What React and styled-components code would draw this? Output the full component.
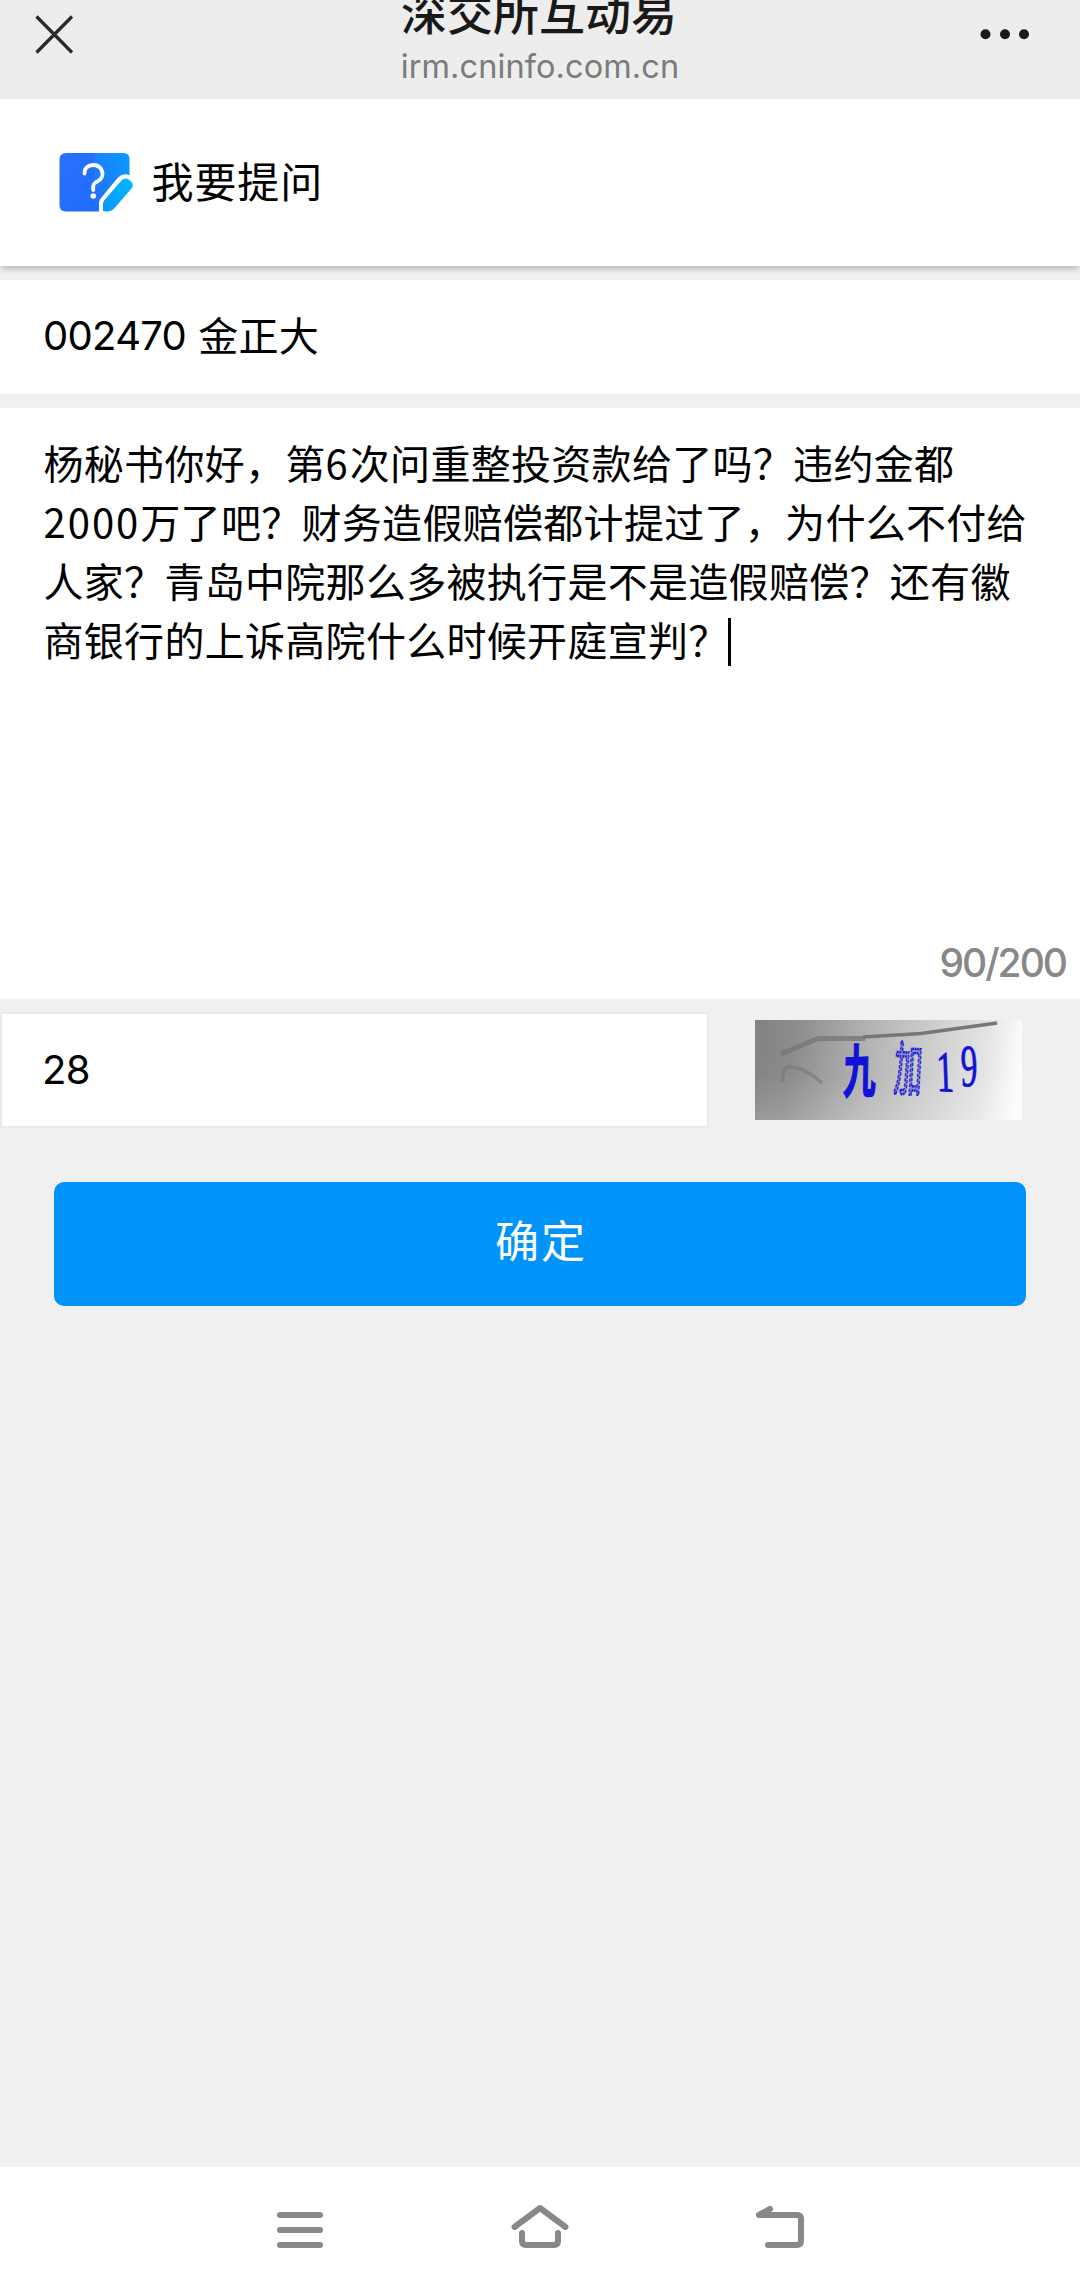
import React from 'react';
import styled, { createGlobalStyle } from 'styled-components';

const GlobalStyle = createGlobalStyle`
  * { box-sizing: border-box; }
  body {
    margin: 0;
    background: #f0f0f0;
    font-family: Roboto, "Noto Sans CJK SC", sans-serif;
    color: #000;
  }
`;

const Screen = styled.div`
  display: flex;
  flex-direction: column;
  width: 1080px;
  height: 2293px;
  overflow: hidden;
  background: #f0f0f0;
`;

const TopBar = styled.header`
  display: grid;
  grid-template-columns: 200px 1fr 200px;
  flex: none;
  height: 99px;
  background: #ededed;
  overflow: hidden;
`;

const BarIcon = styled.div`
  display: flex;
  justify-content: ${(p) => p.$side};
  padding: 14px 49px 0 35px;
  svg { display: block; flex: none; }
`;

const TitleBlock = styled.div`
  display: flex;
  flex-direction: column;
  align-items: center;
  white-space: nowrap;
`;

const SiteTitle = styled.div`
  margin: -19px 2px 0 0;
  height: 58px;
  font: 500 46px/58px "Noto Sans CJK SC", sans-serif;
  color: #191919;
`;

const SiteHost = styled.div`
  margin-top: 8px;
  font-family: Inter, sans-serif;
  font-size: 32.5px;
  line-height: 40px;
  letter-spacing: 0.1px;
  color: #7b7b7b;
`;

const PageHead = styled.section`
  display: flex;
  align-items: center;
  flex: none;
  height: 167px;
  padding: 0 0 2px 58px;
  background: #fff;
  box-shadow: 0 4px 6px -1px rgba(0, 0, 0, 0.24);
  svg { display: block; }
`;

const PageTitle = styled.h1`
  margin: 0 0 3px 15.5px;
  font: 400 42px/60px "Noto Sans CJK SC", sans-serif;
  letter-spacing: 0.9px;
`;

const StockRow = styled.div`
  display: flex;
  align-items: center;
  flex: none;
  gap: 12px;
  height: 114px;
  margin-top: 14px;
  padding: 0 0 2px 43px;
  background: #fff;
`;

const StockName = styled.span`
  padding-bottom: 5px;
  font-family: "Noto Sans CJK SC", sans-serif;
  font-size: 40px;
  letter-spacing: 0.35px;
`;

const Value = styled.span`
  padding-bottom: 1px;
  font-family: Inter, sans-serif;
  font-size: 40px;
  letter-spacing: -0.7px;
`;

const Digits = styled.span`
  letter-spacing: 2px;
`;

const QuestionBox = styled.section`
  display: flex;
  flex-direction: column;
  justify-content: space-between;
  flex: none;
  height: 591px;
  margin-top: 14px;
  padding: 25px 14px 13px 43.5px;
  background: #fff;
`;

const Question = styled.div`
  font: 400 40px/59px "Noto Sans CJK SC", sans-serif;
  letter-spacing: 0.3px;
  white-space: nowrap;
`;

const Line = styled.div`
  display: flex;
  align-items: center;
  height: 59px;
`;

const Caret = styled.i`
  width: 3px;
  height: 48px;
  margin: 4px 0 0 -1px;
  background: #000;
`;

const Counter = styled.div`
  align-self: flex-end;
  font-family: Inter, sans-serif;
  font-size: 39px;
  line-height: 46px;
  font-weight: 500;
  letter-spacing: -2px;
  color: #888;
`;

const VerifyRow = styled.div`
  display: flex;
  align-items: flex-start;
  flex: none;
  margin-top: 13px;
`;

const CodeInput = styled.div`
  display: flex;
  align-items: center;
  width: 708.5px;
  height: 116px;
  padding-left: 40px;
  border: 2px solid #eaeaea;
  background: #fff;
`;

const Captcha = styled.div`
  width: 267px;
  height: 100px;
  margin: 8px 0 0 46.5px;
  background:
    linear-gradient(180deg, rgba(255,255,255,0) 55%, rgba(255,255,255,0.16)),
    linear-gradient(97deg, #828282 0%, #8c8c8c 15%, #b4b4b4 42%, #d2d2d2 68%, #e4e4e4 84%, #fcfcfc 97%);
  svg { display: block; }
`;

const Submit = styled.button`
  flex: none;
  height: 124px;
  margin: 54px 54px 0;
  padding: 0 0 10px 2px;
  border: 0;
  border-radius: 10px;
  background: #0094fb;
  color: #fff;
  font: 400 44px/60px "Noto Sans CJK SC", sans-serif;
  letter-spacing: 2px;
`;

const NavBar = styled.nav`
  display: flex;
  justify-content: center;
  gap: 180px;
  flex: none;
  height: 126px;
  margin-top: auto;
  padding-top: 33px;
  background: #fff;
  svg { display: block; }
`;

const NavIcon = ({ children }) => (
  <svg width="60" height="54" viewBox="0 0 60 54" fill="none" stroke="#888" strokeWidth="6" strokeLinecap="round" strokeLinejoin="round">
    {children}
  </svg>
);

const AskIcon = () => (
  <svg width="78" height="66" viewBox="0 0 78 66">
    <defs>
      <linearGradient id="cardLeft" x1="0" y1="0" x2="1" y2="1">
        <stop offset="0" stopColor="#2d70ff" />
        <stop offset="1" stopColor="#1e6cfc" />
      </linearGradient>
      <linearGradient id="cardRight" x1="1" y1="0" x2="0" y2="1">
        <stop offset="0" stopColor="#0a9cff" />
        <stop offset="1" stopColor="#246cff" />
      </linearGradient>
      <linearGradient id="pen" x1="1" y1="0" x2="0" y2="1">
        <stop offset="0" stopColor="#00b8ff" />
        <stop offset="1" stopColor="#0798ff" />
      </linearGradient>
    </defs>
    <path d="M8 4H37V62.500H8Q1.500 62.500 1.500 56V10.500Q1.500 4 8 4Z" fill="url(#cardLeft)" />
    <path d="M36.500 4H65.500Q71.500 4 71.500 10V50L60 62.500H36.500Z" fill="url(#cardRight)" />
    <path d="M41 66V54Q41 51 43 49L60 28.500Q65 23.500 71 26L78 31V66Z" fill="#fff" />
    <path d="M45 62V55Q45 53 46.500 51L63.500 31.500Q67.500 27.500 72 31.500Q76.500 35.500 73.500 39.500L57 58.500Q54 62.500 49 62.500Z" fill="url(#pen)" />
    <path d="M26.500 24.500C26.500 19 30 16 35.200 16C41 16 44.500 20 44.500 25C44.500 30 41 31.500 37.500 33.500Q35.200 35 35.200 37V41" fill="none" stroke="#fff" strokeWidth="3.800" strokeLinecap="round" strokeLinejoin="round" />
    <circle cx="35.200" cy="47" r="2.800" fill="#fff" />
  </svg>
);

const CaptchaArt = () => (
  <svg width="267" height="100" viewBox="0 0 267 100">
    <g fill="none" stroke="#777" strokeLinejoin="round">
      <path d="M26 34L63 18.500H110" strokeWidth="5" opacity="0.8" />
      <path d="M108 17L166 13.500L242 3" strokeWidth="3.500" />
      <path d="M27.500 62Q27 48 33 47Q48 46 67 63" strokeWidth="3.500" opacity="0.6" />
    </g>
    <g fill="#1111d8" stroke="#1111d8">
      <text transform="translate(88 73) rotate(-2) skewX(-3) scale(.56 1)" fontFamily="Noto Sans CJK SC, sans-serif" fontWeight="700" fontSize="58" strokeWidth="1.500">九</text>
      <text transform="translate(138 70) rotate(3) scale(.48 1)" fontFamily="Noto Sans CJK SC, sans-serif" fontSize="59" fill="#1111d8" fillOpacity=".35" strokeWidth="2.400" strokeDasharray="3.500 1.500">加</text>
      <text transform="translate(182 71) rotate(2) skewX(4) scale(.6 1)" fontFamily="Liberation Serif, serif" fontSize="58" strokeWidth=".9">1</text>
      <text transform="translate(206 66) rotate(1) skewX(2) scale(.56 1)" fontFamily="Liberation Serif, serif" fontSize="60" strokeWidth=".8">9</text>
    </g>
  </svg>
);

export default function App() {
  return (
    <Screen>
      <GlobalStyle />
      <TopBar>
        <BarIcon $side="flex-start">
          <svg width="40" height="40" viewBox="0 0 40 40" stroke="#2a2a2a" strokeWidth="3.300">
            <path d="M1.500 2.500L37 38.500M37 2.500L1.500 38.500" />
          </svg>
        </BarIcon>
        <TitleBlock>
          <SiteTitle>深交所互动易</SiteTitle>
          <SiteHost>irm.cninfo.com.cn</SiteHost>
        </TitleBlock>
        <BarIcon $side="flex-end">
          <svg width="52" height="40" viewBox="0 0 52 40" fill="#191919">
            <circle cx="6.500" cy="20.300" r="5" />
            <circle cx="26" cy="20.300" r="5" />
            <circle cx="45" cy="20.300" r="5" />
          </svg>
        </BarIcon>
      </TopBar>
      <PageHead>
        <AskIcon />
        <PageTitle>我要提问</PageTitle>
      </PageHead>
      <StockRow><Value>002470</Value><StockName>金正大</StockName></StockRow>
      <QuestionBox>
        <Question>
          <Line>杨秘书你好，第<Digits>6</Digits>次问重整投资款给了吗？违约金都</Line>
          <Line><Digits>2000</Digits>万了吧？财务造假赔偿都计提过了，为什么不付给</Line>
          <Line>人家？青岛中院那么多被执行是不是造假赔偿？还有徽</Line>
          <Line>商银行的上诉高院什么时候开庭宣判？<Caret /></Line>
        </Question>
        <Counter>90/200</Counter>
      </QuestionBox>
      <VerifyRow>
        <CodeInput><Value>28</Value></CodeInput>
        <Captcha><CaptchaArt /></Captcha>
      </VerifyRow>
      <Submit>确定</Submit>
      <NavBar>
        <NavIcon><path d="M10 15H50M10 30H50M10 45H50" /></NavIcon>
        <NavIcon><path d="M4.500 27L30 8L55.500 27M12 33V41Q12 45 16 45H44Q48 45 48 41V33" /></NavIcon>
        <NavIcon><path d="M20 9L9 15H47Q51 15 51 19V41Q51 45 47 45H18" /></NavIcon>
      </NavBar>
    </Screen>
  );
}
